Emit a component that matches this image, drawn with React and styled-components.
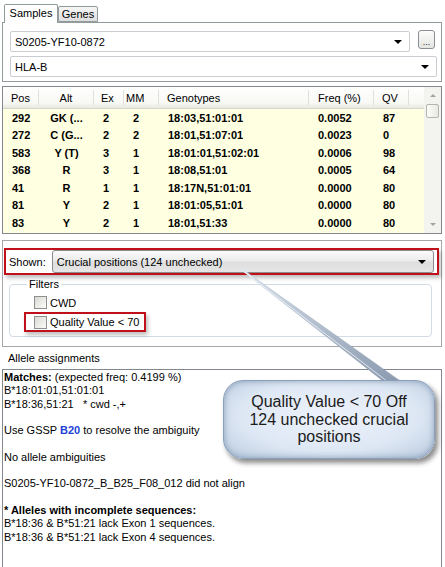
import React from "react";
import styled, { createGlobalStyle } from "styled-components";

const GlobalStyle = createGlobalStyle`
  html, body { margin: 0; padding: 0; background: #fff; }
  body {
    font-family: "Liberation Sans", Arial, sans-serif;
    font-size: 11px;
    color: #000;
  }
  * { box-sizing: border-box; }
`;

const Page = styled.div`
  position: relative;
  width: 445px;
  height: 567px;
  overflow: hidden;
  padding: 4px 3px 0 2px;
`;

/* ---------- tabs ---------- */

const TabStrip = styled.div`
  display: flex;
  align-items: flex-end;
  height: 18px;
  padding-left: 2px;
`;

const Tab = styled.div`
  position: relative;
  z-index: ${({ $active }) => ($active ? 1 : 0)};
  width: ${({ $w }) => $w}px;
  height: ${({ $active }) => ($active ? 19 : 16)}px;
  margin-bottom: ${({ $active }) => ($active ? -1 : 0)}px;
  display: flex;
  align-items: center;
  justify-content: center;
  border: 1px solid #919b9c;
  border-bottom: ${({ $active }) => ($active ? "none" : "1px solid #919b9c")};
  border-radius: 2px 2px 0 0;
  background: ${({ $active }) =>
    $active ? "#fff" : "linear-gradient(#f6f6f6, #dedede)"};
  padding-bottom: ${({ $active }) => ($active ? 2 : 0)}px;
`;

const TabPanel = styled.div`
  height: 60px;
  border: 1px solid #919b9c;
  padding: 8px 0 0 7px;
  display: flex;
  flex-direction: column;
  gap: 4px;
`;

const ComboRow = styled.div`
  display: flex;
  align-items: flex-start;
  gap: 8px;
`;

const Combo = styled.div`
  width: ${({ $w }) => ($w ? `${$w}px` : "auto")};
  flex: ${({ $w }) => ($w ? "none" : 1)};
  height: ${({ $h }) => $h || 21}px;
  display: flex;
  align-items: center;
  justify-content: space-between;
  padding: 0 7px 0 4px;
  border: 1px solid ${({ $gray }) => ($gray ? "#8c8c8c" : "#c9ccd1")};
  border-radius: ${({ $gray }) => ($gray ? 3 : 2)}px;
  background: ${({ $gray }) =>
    $gray
      ? "linear-gradient(#fbfbfb 0%, #ececec 45%, #dedede 55%, #e6e6e6 100%)"
      : "#fff"};
`;

const Arrow = styled.span`
  width: 0;
  height: 0;
  border-left: 4px solid transparent;
  border-right: 4px solid transparent;
  border-top: 4px solid #000;
`;

const DotsButton = styled.div`
  width: 17px;
  height: 19px;
  margin-top: -1px;
  border: 1px solid #8a8f96;
  border-radius: 3px;
  background: linear-gradient(#fdfdfd, #e4e4e0);
  display: flex;
  align-items: flex-end;
  justify-content: center;
  font-size: 9px;
  line-height: 12px;
  color: #222;
`;

/* ---------- grid ---------- */

const Grid = styled.div`
  margin-top: 4px;
  height: 148px;
  border: 1px solid #828790;
  display: flex;
  background: #ffffe1;
  overflow: hidden;
`;

const GridBody = styled.div`
  flex: 1;
  display: flex;
  flex-direction: column;
`;

const COLS = "36px 55px 30px 35px 150px 65px 35px 1fr";

const HeaderRow = styled.div`
  display: grid;
  grid-template-columns: ${COLS};
  height: 22px;
  background: linear-gradient(#ffffff 0%, #f8f8f5 75%, #e9e8e1 100%);
  border-bottom: 1px solid #d6d5cc;
`;

const HeaderCell = styled.div`
  display: flex;
  align-items: center;
  justify-content: ${({ $center }) => ($center ? "center" : "flex-start")};
  padding-left: ${({ $pad }) => $pad}px;
  margin: 3px 0;
  border-right: ${({ $last }) => ($last ? "none" : "1px solid #e1e0d8")};
`;

const DataRow = styled.div`
  display: grid;
  grid-template-columns: ${COLS};
  height: 17.5px;
  align-items: center;
  font-weight: bold;
`;

const DataCell = styled.div`
  text-align: ${({ $center }) => ($center ? "center" : "left")};
  padding-left: ${({ $center }) => ($center ? 0 : 9)}px;
  white-space: nowrap;
`;

const Scrollbar = styled.div`
  width: 17px;
  background: #f3f3ef;
  display: flex;
  flex-direction: column;
  align-items: center;
`;

const ScrollArrow = styled.div`
  width: 17px;
  height: 17px;
  display: flex;
  align-items: center;
  justify-content: center;
  margin-top: ${({ $down }) => ($down ? "auto" : 0)};
  &::after {
    content: "";
    width: 0;
    height: 0;
    border-left: 3px solid transparent;
    border-right: 3px solid transparent;
    ${({ $down }) =>
      $down ? "border-top: 3px solid #a3a3a3;" : "border-bottom: 3px solid #a3a3a3;"}
  }
`;

const Thumb = styled.div`
  width: 13px;
  height: 14px;
  border: 1px solid #b5b5b0;
  border-radius: 2px;
  background: linear-gradient(90deg, #fbfbf8, #e9e9e4);
`;

/* ---------- shown / filters ---------- */

const ShownPanel = styled.div`
  margin-top: 6px;
  height: 107px;
  border: 1px solid #a7a6aa;
  padding: 7px 2px 0 1px;
`;

const ShownBar = styled.div`
  height: 27px;
  border: 2px solid #c0101a;
  box-shadow: 2px 3px 4px rgba(0, 0, 0, 0.25);
  display: flex;
  align-items: center;
  gap: 6px;
  padding: 0 3px 0 3px;
`;

const Fieldset = styled.fieldset`
  margin: 3px 7px 0 5px;
  height: 59px;
  padding: 0 0 0 14px;
  border: 1px solid #d3dbe6;
  border-radius: 4px;
`;

const Legend = styled.legend`
  padding: 0 2px;
  margin-left: 3px;
  line-height: 13px;
`;

const CheckRow = styled.div`
  display: flex;
  align-items: center;
  gap: 3px;
  height: ${({ $hl }) => ($hl ? 20 : 19)}px;
  width: ${({ $hl }) => ($hl ? "122px" : "auto")};
  margin-top: ${({ $hl }) => ($hl ? 0 : 2)}px;
  padding-left: ${({ $hl }) => ($hl ? 8 : 10)}px;
  border: ${({ $hl }) => ($hl ? "2px solid #c0101a" : "none")};
  box-shadow: ${({ $hl }) => ($hl ? "2px 3px 4px rgba(0,0,0,0.25)" : "none")};
`;

const Box = styled.span`
  width: 13px;
  height: 13px;
  border: 1px solid #8e8f8f;
  background: linear-gradient(135deg, #d9d9d4, #fbfbf9);
`;

/* ---------- allele assignments ---------- */

const SectionLabel = styled.div`
  padding: 5px 0 0 6px;
  height: 22px;
  line-height: 13px;
`;

const TextBox = styled.div`
  height: 220px;
  border: 1px solid #828790;
  padding: 1px 0 0 1px;
  line-height: 13.3px;
`;

const Line = styled.div`
  white-space: pre;
  margin-bottom: ${({ $gap }) => ($gap ? "13.3px" : 0)};
`;

const B = styled.b`
  color: ${({ $blue }) => ($blue ? "#1c3fd6" : "inherit")};
`;

/* ---------- callout ---------- */

const Pointer = styled.svg`
  position: absolute;
  left: 0;
  top: 0;
  pointer-events: none;
`;

const Bubble = styled.div`
  position: absolute;
  left: 223px;
  top: 380px;
  width: 212px;
  height: 79px;
  border: 1px solid #8ba0ba;
  border-radius: 20px;
  background: radial-gradient(ellipse at 50% 45%, #eef3fb 0%, #dde7f4 60%, #b9cade 100%);
  box-shadow: inset 0 0 6px rgba(80, 105, 140, 0.55), 3px 4px 5px rgba(0, 0, 0, 0.45);
  display: flex;
  align-items: center;
  justify-content: center;
  text-align: center;
  font-size: 16px;
  line-height: 17.5px;
  color: #1b1b1b;
`;

const columns = [
  { label: "Pos", pad: 8 },
  { label: "Alt", center: true },
  { label: "Ex", pad: 7 },
  { label: "MM", pad: 2 },
  { label: "Genotypes", pad: 8 },
  { label: "Freq (%)", pad: 9 },
  { label: "QV", pad: 8 },
  { label: "", last: true },
];

const rows = [
  ["292", "GK (...", "2", "2", "18:03,51:01:01", "0.0052", "87"],
  ["272", "C (G...", "2", "2", "18:01,51:07:01", "0.0023", "0"],
  ["583", "Y (T)", "3", "1", "18:01:01,51:02:01", "0.0006", "98"],
  ["368", "R", "3", "1", "18:08,51:01", "0.0005", "64"],
  ["41", "R", "1", "1", "18:17N,51:01:01", "0.0000", "80"],
  ["81", "Y", "2", "1", "18:01:05,51:01", "0.0000", "80"],
  ["83", "Y", "2", "1", "18:01,51:33", "0.0000", "80"],
];

export default function App() {
  return (
    <>
      <GlobalStyle />
      <Page>
        <TabStrip>
          <Tab $active $w={54}>Samples</Tab>
          <Tab $w={40}>Genes</Tab>
        </TabStrip>
        <TabPanel>
          <ComboRow>
            <Combo $w={400}>
              S0205-YF10-0872
              <Arrow />
            </Combo>
            <DotsButton>...</DotsButton>
          </ComboRow>
          <Combo $w={427}>
            HLA-B
            <Arrow />
          </Combo>
        </TabPanel>

        <Grid>
          <GridBody>
            <HeaderRow>
              {columns.map((c, i) => (
                <HeaderCell key={i} $pad={c.pad || 0} $center={c.center} $last={c.last}>
                  {c.label}
                </HeaderCell>
              ))}
            </HeaderRow>
            {rows.map((r, i) => (
              <DataRow key={i}>
                {r.map((v, j) => (
                  <DataCell key={j} $center={j === 1}>
                    {v}
                  </DataCell>
                ))}
              </DataRow>
            ))}
          </GridBody>
          <Scrollbar>
            <ScrollArrow />
            <Thumb />
            <ScrollArrow $down />
          </Scrollbar>
        </Grid>

        <ShownPanel>
          <ShownBar>
            <span>Shown:</span>
            <Combo $gray $h={23}>
              Crucial positions (124 unchecked)
              <Arrow />
            </Combo>
          </ShownBar>
          <Fieldset>
            <Legend>Filters</Legend>
            <CheckRow>
              <Box />
              CWD
            </CheckRow>
            <CheckRow $hl>
              <Box />
              Quality Value &lt; 70
            </CheckRow>
          </Fieldset>
        </ShownPanel>

        <SectionLabel>Allele assignments</SectionLabel>
        <TextBox>
          <Line>
            <B>Matches:</B> (expected freq: 0.4199 %)
          </Line>
          <Line>B*18:01:01,51:01:01</Line>
          <Line $gap>B*18:36,51:21   * cwd -,+</Line>
          <Line $gap>
            Use GSSP <B $blue>B20</B> to resolve the ambiguity
          </Line>
          <Line $gap>No allele ambiguities</Line>
          <Line $gap>S0205-YF10-0872_B_B25_F08_012 did not align</Line>
          <Line>
            <B>* Alleles with incomplete sequences:</B>
          </Line>
          <Line>B*18:36 &amp; B*51:21 lack Exon 1 sequences.</Line>
          <Line>B*18:36 &amp; B*51:21 lack Exon 4 sequences.</Line>
        </TextBox>

        <Pointer width="445" height="567" viewBox="0 0 445 567">
          <defs>
            <linearGradient id="ptr" x1="0" y1="0" x2="1" y2="1">
              <stop offset="0" stopColor="#d7e0ea" />
              <stop offset="1" stopColor="#8797ad" />
            </linearGradient>
          </defs>
          <polygon points="243,270 246,271 409,386 391,386" fill="#5d6b7f" opacity="0.35" transform="translate(2,2)" />
          <polygon points="241,270 244,270 407,386 389,386" fill="url(#ptr)" />
          <line x1="242" y1="270" x2="392" y2="385" stroke="#f2f6fb" strokeWidth="0.8" />
        </Pointer>
        <Bubble>
          Quality Value &lt; 70 Off
          <br />
          124 unchecked crucial
          <br />
          positions
        </Bubble>
      </Page>
    </>
  );
}
